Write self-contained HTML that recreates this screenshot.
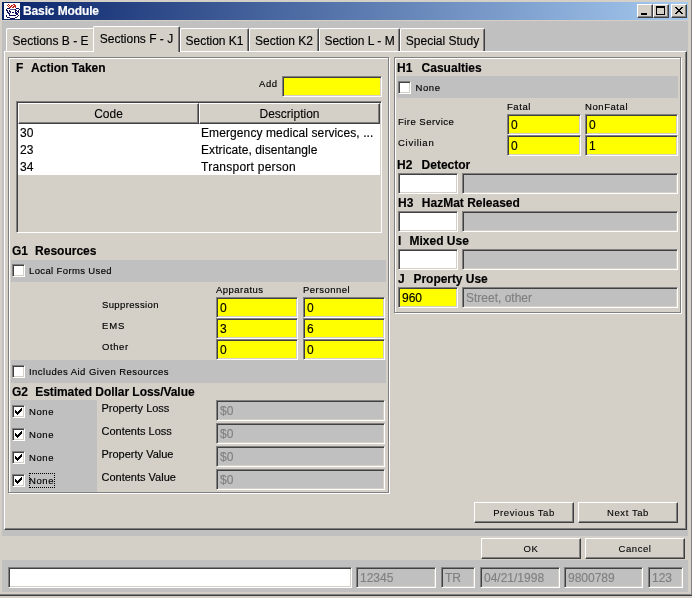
<!DOCTYPE html>
<html><head><meta charset="utf-8"><title>Basic Module</title>
<style>
*{box-sizing:border-box;margin:0;padding:0}
html,body{width:692px;height:598px;overflow:hidden;background:#d4d0c8}
body{-webkit-text-stroke:.15px;position:relative;font-family:"Liberation Sans",sans-serif;font-size:12px;color:#000}
.a{position:absolute}
.bg{background:#d4d0c8}
.lg{background:#c0c0c0}
.b{font-weight:bold;font-size:12px;white-space:pre;line-height:14px}
.s{-webkit-text-stroke:.15px;font-family:"Liberation Sans",sans-serif;font-size:9.5px;letter-spacing:.37px;white-space:nowrap;line-height:12px}
.t{font-size:12px;white-space:nowrap;line-height:14px}
.tf{border:1px solid;border-color:#808080 #fff #fff #808080;box-shadow:inset 1px 1px 0 #404040,inset -1px -1px 0 #d4d0c8;height:21px;font-size:12px;line-height:14px;padding:3px 0 0 3px;white-space:nowrap;overflow:hidden}
.y{background:#ffff00}
.w{background:#fff}
.g{background:#c0c0c0;color:#808080}
.btn{-webkit-text-stroke:.1px;border:1px solid;border-color:#fff #404040 #404040 #fff;box-shadow:inset -1px -1px 0 #808080;background:#d4d0c8;text-align:center;font-family:"Liberation Sans",sans-serif;font-size:9.5px;letter-spacing:.57px;line-height:19px;height:21px}
.cb{width:13px;height:13px;background:#fff;border:1px solid;border-color:#808080 #fff #fff #808080;box-shadow:inset 1px 1px 0 #404040,inset -1px -1px 0 #d4d0c8}
.e1{border:1px solid #fff}
.e2{border:1px solid #808080}
.tab{background:#d4d0c8;border-top:1px solid #fff;border-left:1px solid #fff;border-right:1px solid #404040;box-shadow:inset -1px 0 0 #808080;border-radius:2px 2px 0 0;text-align:center;font-size:12px;line-height:14px;white-space:nowrap}
</style></head><body><div id="root" class="a" style="left:0;top:0;width:692px;height:598px;will-change:transform">
<!-- window frame -->
<div class="a" style="left:0;top:0;width:692px;height:598px;background:#d4d0c8"></div>
<div class="a lg" style="left:2px;top:21px;width:686px;height:571px"></div>
<div class="a" style="left:691px;top:0;width:1px;height:596px;background:#808080"></div>
<div class="a" style="left:0;top:594px;width:692px;height:1px;background:#808080"></div>
<div class="a" style="left:0;top:595px;width:692px;height:1px;background:#404040"></div>
<!-- title bar -->
<div class="a" style="left:2px;top:2px;width:686px;height:18px;background:linear-gradient(90deg,#0a246a 0%,#a6caf0 100%)"></div>
<div class="a" style="left:4px;top:3px;width:16px;height:16px;background:#fff">
<svg width="16" height="16" viewBox="0 0 16 16" shape-rendering="crispEdges"><rect x="4" y="1" width="1" height="1" fill="#c8281e"/><rect x="9" y="1" width="2" height="1" fill="#c8281e"/><rect x="3" y="2" width="1" height="1" fill="#c8281e"/><rect x="5" y="2" width="1" height="1" fill="#c8281e"/><rect x="7" y="2" width="2" height="1" fill="#c8281e"/><rect x="10" y="2" width="2" height="1" fill="#c8281e"/><rect x="4" y="3" width="1" height="1" fill="#c8281e"/><rect x="6" y="3" width="2" height="1" fill="#c8281e"/><rect x="9" y="3" width="3" height="1" fill="#c8281e"/><rect x="5" y="4" width="2" height="1" fill="#c8281e"/><rect x="8" y="4" width="2" height="1" fill="#c8281e"/><rect x="11" y="4" width="1" height="1" fill="#c8281e"/><rect x="3" y="5" width="3" height="1" fill="#0c0c5a"/><rect x="12" y="5" width="3" height="1" fill="#0c0c5a"/><rect x="2" y="6" width="1" height="1" fill="#0c0c5a"/><rect x="6" y="6" width="5" height="1" fill="#50508c"/><rect x="11" y="6" width="1" height="1" fill="#0c0c5a"/><rect x="15" y="6" width="1" height="1" fill="#0c0c5a"/><rect x="2" y="7" width="2" height="1" fill="#0c0c5a"/><rect x="5" y="7" width="1" height="1" fill="#0c0c5a"/><rect x="11" y="7" width="2" height="1" fill="#0c0c5a"/><rect x="14" y="7" width="1" height="1" fill="#0c0c5a"/><rect x="3" y="8" width="1" height="1" fill="#0c0c5a"/><rect x="5" y="8" width="2" height="1" fill="#0c0c5a"/><rect x="11" y="8" width="1" height="1" fill="#0c0c5a"/><rect x="13" y="8" width="2" height="1" fill="#0c0c5a"/><rect x="3" y="9" width="2" height="1" fill="#0c0c5a"/><rect x="6" y="9" width="1" height="1" fill="#0c0c5a"/><rect x="8" y="9" width="2" height="1" fill="#0c0c5a"/><rect x="11" y="9" width="2" height="1" fill="#0c0c5a"/><rect x="14" y="9" width="1" height="1" fill="#0c0c5a"/><rect x="4" y="10" width="2" height="1" fill="#0c0c5a"/><rect x="11" y="10" width="3" height="1" fill="#0c0c5a"/><rect x="5" y="11" width="1" height="1" fill="#0c0c5a"/><rect x="12" y="11" width="2" height="1" fill="#0c0c5a"/><rect x="2" y="12" width="1" height="1" fill="#0c0c5a"/><rect x="5" y="12" width="7" height="1" fill="#0c0c5a"/><rect x="14" y="12" width="1" height="1" fill="#0c0c5a"/><rect x="2" y="13" width="1" height="1" fill="#0c0c5a"/><rect x="13" y="13" width="1" height="1" fill="#0c0c5a"/><rect x="3" y="14" width="3" height="1" fill="#0c0c5a"/><rect x="11" y="14" width="2" height="1" fill="#0c0c5a"/><rect x="6" y="15" width="5" height="1" fill="#0c0c5a"/></svg>
</div>
<div class="a" style="left:23px;top:4px;color:#fff;font-weight:bold;font-size:12px;line-height:14px;white-space:nowrap;letter-spacing:-.12px">Basic Module</div>
<div class="a btn" style="left:637px;top:4px;width:16px;height:14px"></div>
<div class="a btn" style="left:653px;top:4px;width:16px;height:14px"></div>
<div class="a btn" style="left:671px;top:4px;width:16px;height:14px"></div>
<div class="a" style="left:641px;top:13px;width:6px;height:2px;background:#000"></div>
<div class="a" style="left:656px;top:6px;width:9px;height:9px;border:1px solid #000;border-top-width:2px"></div>
<svg class="a" style="left:675px;top:7px" width="8" height="7" viewBox="0 0 8 7"><path d="M0 0l7 7M1 0l7 7M7 0l-7 7M8 0l-7 7" stroke="#000" stroke-width="1" fill="none" shape-rendering="crispEdges"/></svg>

<!-- tabs -->
<div class="a tab" style="left:6px;top:28px;width:89px;height:23px;padding-top:5px">Sections B - E</div>
<div class="a tab" style="left:180px;top:28px;width:69px;height:23px;padding-top:5px">Section K1</div>
<div class="a tab" style="left:249px;top:28px;width:70px;height:23px;padding-top:5px">Section K2</div>
<div class="a tab" style="left:319px;top:28px;width:81px;height:23px;padding-top:5px">Section L - M</div>
<div class="a tab" style="left:400px;top:28px;width:85px;height:23px;padding-top:5px">Special Study</div>
<!-- tab content -->
<div class="a bg" style="left:4px;top:51px;width:683px;height:479px;border:1px solid;border-color:#fff #404040 #404040 #fff;box-shadow:inset -1px -1px 0 #808080"></div>
<div class="a tab" style="left:93px;top:26px;width:87px;height:26px;padding-top:5px">Sections F - J</div>

<!-- left panel -->
<div class="a e1" style="left:9px;top:58px;width:381px;height:436px"></div>
<div class="a e2" style="left:8px;top:57px;width:381px;height:436px"></div>
<div class="a b" style="left:16px;top:61px"><span style="word-spacing:0.55px;letter-spacing:0">F  </span>Action Taken</div>
<div class="a s" style="left:259px;top:78px;letter-spacing:0.57px">Add</div>
<div class="a tf y" style="left:282px;top:76px;width:100px"></div>
<!-- table -->
<div class="a bg" style="left:16px;top:101px;width:366px;height:132px;border:1px solid;border-color:#808080 #fff #fff #808080;box-shadow:inset 1px 1px 0 #404040,inset -1px -1px 0 #d4d0c8"></div>
<div class="a btn t" style="left:18px;top:103px;width:181px;height:21px;font-family:'Liberation Sans',sans-serif;font-size:12px;letter-spacing:0;line-height:18px;padding-top:1px">Code</div>
<div class="a btn t" style="left:199px;top:103px;width:181px;height:21px;font-family:'Liberation Sans',sans-serif;font-size:12px;letter-spacing:0;line-height:18px;padding-top:1px">Description</div>
<div class="a w" style="left:18px;top:124px;width:362px;height:51px"></div>
<div class="a t" style="left:20px;top:126px">30</div>
<div class="a t" style="left:20px;top:143px">23</div>
<div class="a t" style="left:20px;top:160px">34</div>
<div class="a t" style="left:201px;top:126px;letter-spacing:.1px">Emergency medical services, ...</div>
<div class="a t" style="left:201px;top:143px;letter-spacing:.08px">Extricate, disentangle</div>
<div class="a t" style="left:201px;top:160px;letter-spacing:.25px">Transport person</div>

<div class="a b" style="left:12px;top:244px"><span style="word-spacing:0.2px;letter-spacing:0">G1  </span>Resources</div>
<div class="a lg" style="left:11px;top:260px;width:375px;height:22px"></div>
<div class="a cb" style="left:12px;top:264px"></div>
<div class="a s" style="left:29px;top:265px">Local Forms Used</div>
<div class="a s" style="left:216px;top:284px;letter-spacing:0.47px">Apparatus</div>
<div class="a s" style="left:303px;top:284px;letter-spacing:0.47px">Personnel</div>
<div class="a s" style="left:102px;top:299px">Suppression</div>
<div class="a s" style="left:102px;top:320px;letter-spacing:0.87px">EMS</div>
<div class="a s" style="left:102px;top:341px;letter-spacing:0.57px">Other</div>
<div class="a tf y" style="left:216px;top:297px;width:82px">0</div>
<div class="a tf y" style="left:303px;top:297px;width:82px">0</div>
<div class="a tf y" style="left:216px;top:318px;width:82px">3</div>
<div class="a tf y" style="left:303px;top:318px;width:82px">6</div>
<div class="a tf y" style="left:216px;top:339px;width:82px">0</div>
<div class="a tf y" style="left:303px;top:339px;width:82px">0</div>
<div class="a lg" style="left:11px;top:360px;width:375px;height:23px"></div>
<div class="a cb" style="left:12px;top:365px"></div>
<div class="a s" style="left:29px;top:366px;letter-spacing:0.47px">Includes Aid Given Resources</div>
<div class="a b" style="left:12px;top:385px;letter-spacing:-.05px"><span style="word-spacing:0.25px;letter-spacing:0">G2  </span>Estimated Dollar Loss/Value</div>
<div class="a lg" style="left:11px;top:400px;width:86px;height:92px"></div>
<div class="a cb" style="left:12px;top:405px"><svg class="a" style="left:2px;top:2px" width="7" height="7" viewBox="0 0 7 7" shape-rendering="crispEdges"><path d="M0 2h1v3h-1zM1 3h1v3h-1zM2 4h1v3h-1zM3 3h1v3h-1zM4 2h1v3h-1zM5 1h1v3h-1zM6 0h1v3h-1z" fill="#000"/></svg></div><div class="a s" style="left:29px;top:406px;letter-spacing:0.57px">None</div>
<div class="a cb" style="left:12px;top:428px"><svg class="a" style="left:2px;top:2px" width="7" height="7" viewBox="0 0 7 7" shape-rendering="crispEdges"><path d="M0 2h1v3h-1zM1 3h1v3h-1zM2 4h1v3h-1zM3 3h1v3h-1zM4 2h1v3h-1zM5 1h1v3h-1zM6 0h1v3h-1z" fill="#000"/></svg></div><div class="a s" style="left:29px;top:429px;letter-spacing:0.57px">None</div>
<div class="a cb" style="left:12px;top:451px"><svg class="a" style="left:2px;top:2px" width="7" height="7" viewBox="0 0 7 7" shape-rendering="crispEdges"><path d="M0 2h1v3h-1zM1 3h1v3h-1zM2 4h1v3h-1zM3 3h1v3h-1zM4 2h1v3h-1zM5 1h1v3h-1zM6 0h1v3h-1z" fill="#000"/></svg></div><div class="a s" style="left:29px;top:452px;letter-spacing:0.57px">None</div>
<div class="a cb" style="left:12px;top:474px"><svg class="a" style="left:2px;top:2px" width="7" height="7" viewBox="0 0 7 7" shape-rendering="crispEdges"><path d="M0 2h1v3h-1zM1 3h1v3h-1zM2 4h1v3h-1zM3 3h1v3h-1zM4 2h1v3h-1zM5 1h1v3h-1zM6 0h1v3h-1z" fill="#000"/></svg></div><div class="a s" style="left:29px;top:475px;letter-spacing:0.57px">None</div>
<div class="a" style="left:29px;top:473px;width:26px;height:15px;border:1px dotted #000"></div>
<div class="a t" style="left:101.5px;top:401px;font-size:11px">Property Loss</div>
<div class="a t" style="left:101.5px;top:424px;font-size:11px">Contents Loss</div>
<div class="a t" style="left:101.5px;top:447px;font-size:11px">Property Value</div>
<div class="a t" style="left:101.5px;top:470px;font-size:11px">Contents Value</div>
<div class="a tf g" style="left:216px;top:400px;width:169px">$0</div>
<div class="a tf g" style="left:216px;top:423px;width:169px">$0</div>
<div class="a tf g" style="left:216px;top:446px;width:169px">$0</div>
<div class="a tf g" style="left:216px;top:469px;width:169px">$0</div>

<!-- right panel -->
<div class="a e1" style="left:395px;top:58px;width:287px;height:256px"></div>
<div class="a e2" style="left:394px;top:57px;width:287px;height:256px"></div>
<div class="a b" style="left:397px;top:61px"><span style="word-spacing:1.3px;letter-spacing:0">H1  </span>Casualties</div>
<div class="a lg" style="left:397px;top:76px;width:281px;height:22px"></div>
<div class="a cb" style="left:398px;top:81px"></div>
<div class="a s" style="left:415.5px;top:82px;letter-spacing:.57px">None</div>
<div class="a s" style="left:507px;top:101px;letter-spacing:0.57px">Fatal</div>
<div class="a s" style="left:585px;top:101px;letter-spacing:0.57px">NonFatal</div>
<div class="a s" style="left:398px;top:116px;letter-spacing:0.47px">Fire Service</div>
<div class="a s" style="left:398px;top:137px;letter-spacing:0.72px">Civilian</div>
<div class="a tf y" style="left:507px;top:114px;width:74px">0</div>
<div class="a tf y" style="left:585px;top:114px;width:93px">0</div>
<div class="a tf y" style="left:507px;top:135px;width:74px">0</div>
<div class="a tf y" style="left:585px;top:135px;width:93px">1</div>
<div class="a b" style="left:397px;top:158px"><span style="word-spacing:1.3px;letter-spacing:0">H2  </span>Detector</div>
<div class="a tf w" style="left:398px;top:173px;width:60px"></div>
<div class="a tf g" style="left:462px;top:173px;width:216px"></div>
<div class="a b" style="left:398px;top:196px"><span style="word-spacing:0.9px;letter-spacing:0">H3  </span>HazMat Released</div>
<div class="a tf w" style="left:398px;top:211px;width:60px"></div>
<div class="a tf g" style="left:462px;top:211px;width:216px"></div>
<div class="a b" style="left:398px;top:234px"><span style="word-spacing:0.75px;letter-spacing:0">I  </span>Mixed Use</div>
<div class="a tf w" style="left:398px;top:249px;width:60px"></div>
<div class="a tf g" style="left:462px;top:249px;width:216px"></div>
<div class="a b" style="left:398px;top:272px;letter-spacing:-.05px"><span style="word-spacing:1.1px;letter-spacing:0">J  </span>Property Use</div>
<div class="a tf y" style="left:398px;top:287px;width:60px">960</div>
<div class="a tf g" style="left:462px;top:287px;width:216px">Street, other</div>

<!-- nav buttons -->
<div class="a btn" style="left:474px;top:502px;width:100px">Previous Tab</div>
<div class="a btn" style="left:578px;top:502px;width:100px">Next Tab</div>

<!-- ok/cancel panel -->
<div class="a bg" style="left:2px;top:536px;width:686px;height:24px"></div>
<div class="a btn" style="left:481px;top:538px;width:100px">OK</div>
<div class="a btn" style="left:585px;top:538px;width:100px">Cancel</div>

<!-- status -->
<div class="a tf w" style="left:8px;top:567px;width:344px"></div>
<div class="a tf g" style="left:356px;top:567px;width:80px">12345</div>
<div class="a tf g" style="left:441px;top:567px;width:34px">TR</div>
<div class="a tf g" style="left:480px;top:567px;width:80px">04/21/1998</div>
<div class="a tf g" style="left:564px;top:567px;width:79px">9800789</div>
<div class="a tf g" style="left:648px;top:567px;width:35px">123</div>
</div></body></html>
